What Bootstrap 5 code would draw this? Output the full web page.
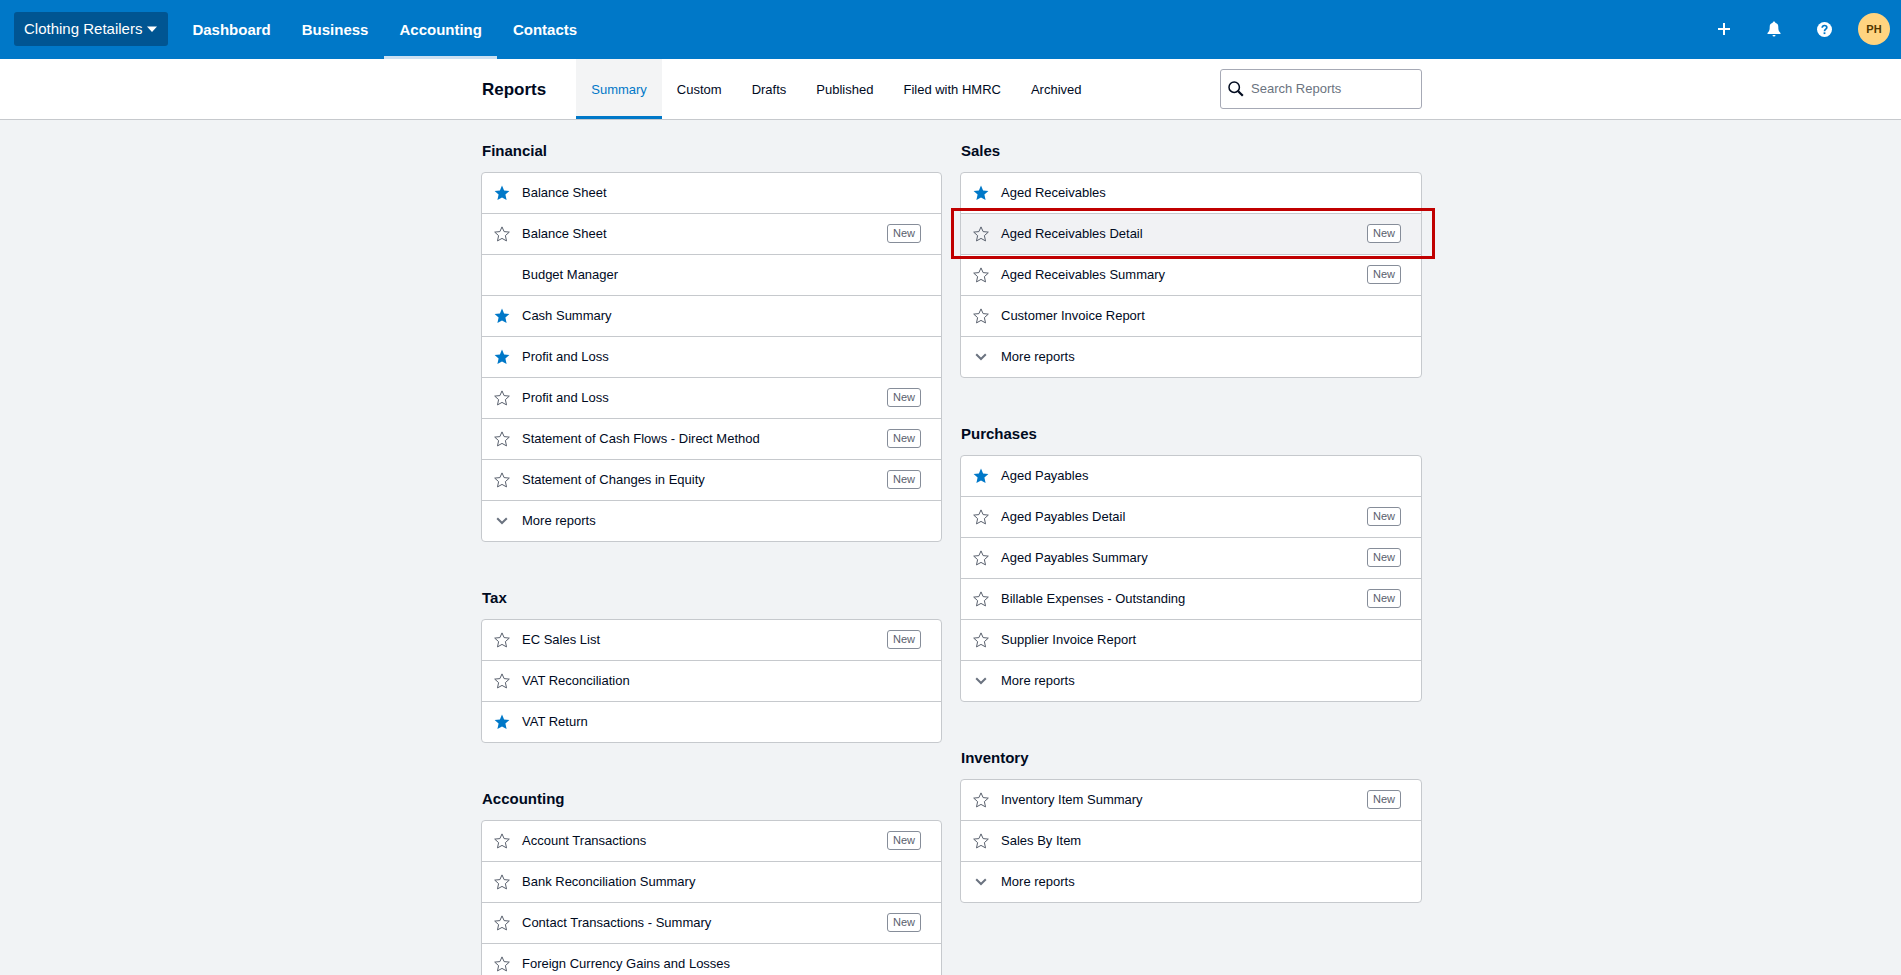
<!DOCTYPE html>
<html lang="en">
<head>
<meta charset="utf-8">
<meta name="viewport" content="width=device-width, initial-scale=1">
<title>Reports</title>
<link href="https://cdn.jsdelivr.net/npm/bootstrap@5.3.0/dist/css/bootstrap.min.css" rel="stylesheet">
<style>
  :root { --brand: #0078c8; --ink: #000a1e; --line: #c6c9cd; --muted: #59606d; }
  body { font-family: "Liberation Sans", Arial, sans-serif; font-size: 13px; line-height: 20px; color: var(--ink); background: #f1f3f5; }
  .topbar { background: var(--brand); height: 59px; padding: 0 2px 0 14px; }
  .org-btn { background: #005592; color: #fff; font-size: 15px; line-height: 20px; height: 34px; padding: 0 10px; border-radius: 3px; border: 0; margin: 0 9px 1px 0; }
  .main-nav { gap: 1px; }
  .main-link { color: #fff; font-size: 15px; font-weight: 700; padding: 0 15px; border-bottom: 3px solid transparent; border-top: 3px solid transparent; display: flex; align-items: center; text-decoration: none; }
  .main-link.active { border-bottom-color: #cbe0f2; }
  .icon-btn { width: 50px; height: 50px; margin-bottom: 1px; padding: 0; border: 0; background: none; color: #fff; display: flex; align-items: center; justify-content: center; }
  .avatar { width: 32px; height: 32px; border-radius: 50%; background: #ffd480; color: #503700; font-size: 11px; font-weight: 700; display: flex; align-items: center; justify-content: center; }
  .subbar { background: #fff; border-bottom: 1px solid var(--line); }
  .wrap { max-width: 943px; margin: 0 auto; padding-left: 2px; }
  .page-title { font-size: 17px; line-height: 20px; font-weight: 700; margin: 0 30px 0 1px; padding-top: 2px; }
  .tab-link { color: var(--ink); height: 60px; padding: 2px 15px 0; border-top: 3px solid transparent; border-bottom: 3px solid transparent; display: flex; align-items: center; text-decoration: none; }
  .tab-link.active { color: var(--brand); background: #f3f4f5; border-top-color: #f3f4f5; border-bottom-color: var(--brand); }
  .search-box { width: 202px; height: 40px; border: 1px solid #a6a9b5; border-radius: 3px; padding: 0 7px; gap: 7px; background: #fff; }
  .search-box input { border: 0; outline: 0; padding: 0; min-width: 0; width: 100%; color: var(--ink); }
  .search-box input::placeholder { color: #6b7380; opacity: 1; }
  .report-cols { display: grid; grid-template-columns: 461fr 462fr; column-gap: 18px; padding-top: 21px; }
  .report-col { min-width: 0; display: flex; flex-direction: column; gap: 46px; }
  .group-title { font-size: 15px; line-height: 20px; font-weight: 700; margin: 0 0 11px 1px; }
  .report-list { border: 1px solid var(--line); border-radius: 4px; background: #fff; margin: 0; padding: 0; list-style: none; }
  .report-row { height: 41px; border-bottom: 1px solid var(--line); display: flex; align-items: center; padding: 0 20px 0 10px; position: relative; }
  .report-row:last-child { border-bottom: 0; height: 40px; }
  .report-row a, .more-btn { color: var(--ink); text-decoration: none; }
  .star-btn { width: 20px; height: 20px; margin-right: 10px; padding: 0; border: 0; background: none; display: flex; align-items: center; justify-content: center; color: var(--muted); }
  .more-btn { border: 0; background: none; padding: 0; display: flex; align-items: center; }
  .more-btn svg { margin: 0 12px 0 2px; color: #6b7380; }
  .new-tag { margin: 0 0 1px auto; width: 34px; height: 19px; border: 1px solid #868d99; border-radius: 3px; background: #fff; color: var(--muted); font-size: 11px; line-height: 17px; text-align: center; }
  .hovered { background: #f1f2f4; }
  .callout-frame { position: absolute; top: -6px; bottom: -5px; left: -10px; right: -14px; border: 3px solid #c00000; pointer-events: none; z-index: 1; }
</style>
</head>
<body class="vh-100 overflow-hidden">
<svg class="d-none" aria-hidden="true">
  <symbol id="star-on" viewBox="0 0 16 16"><path fill="#0078c8" d="M8 .6l2.100 4.900 5.300.5-4 3.500 1.200 5.600L8 12.500l-4.600 2.600 1.200-5.600-4-3.500 5.300-.5z"/></symbol>
  <symbol id="star-off" viewBox="0 0 16 16"><path fill="none" stroke="currentColor" stroke-linejoin="round" d="M8 .9l2.100 4.700 5.200.5-3.900 3.500 1.100 5.300L8 12.400l-4.500 2.500 1.100-5.300L.7 6.100l5.200-.5z"/></symbol>
  <symbol id="chevron" viewBox="0 0 16 16"><path fill="none" stroke="currentColor" stroke-width="2" d="M3.200 5.200L8 10l4.800-4.800"/></symbol>
</svg>

<header class="topbar d-flex align-items-center">
  <button type="button" class="org-btn d-flex align-items-center">Clothing Retailers
    <svg class="ms-1" width="12" height="8" viewBox="0 0 12 8" aria-hidden="true"><path fill="#fff" d="M1 1.500h10L6 7z"/></svg>
  </button>
  <nav class="main-nav d-flex align-self-stretch" aria-label="Main">
    <a class="main-link" href="#">Dashboard</a>
    <a class="main-link" href="#">Business</a>
    <a class="main-link active" href="#" aria-current="page">Accounting</a>
    <a class="main-link" href="#">Contacts</a>
  </nav>
  <div class="d-flex align-items-center ms-auto">
    <button type="button" class="icon-btn" aria-label="Create new"><svg width="12" height="12" viewBox="0 0 12 12"><path fill="#fff" d="M5 0h2v5h5v2H7v5H5V7H0V5h5z"/></svg></button>
    <button type="button" class="icon-btn" aria-label="Notifications"><svg width="14" height="16" viewBox="0 0 14 16"><path fill="#fff" d="M7 .5c.8 0 1.300.6 1.300 1.300C10.600 2.400 11.300 4 11.300 6c0 3 .4 4.300 2.200 6v1H.5v-1C2.300 10.300 2.700 9 2.700 6c0-2 .7-3.600 3-4.200C5.700 1.100 6.200.5 7 .5zM5.500 14h3a1.500 1.500 0 0 1-3 0z"/></svg></button>
    <button type="button" class="icon-btn" aria-label="Help"><svg width="15" height="15" viewBox="0 0 15 15"><circle cx="7.500" cy="7.500" r="7.500" fill="#fff"/><path fill="none" stroke="#0078c8" stroke-width="1.700" d="M5.200 5.700c0-1.300 1-2.200 2.300-2.200s2.300.8 2.300 2c0 1.700-2.300 1.700-2.300 3.700"/><path fill="#0078c8" d="M6.600 10.300h1.800v1.800H6.600z"/></svg></button>
    <button type="button" class="icon-btn" aria-label="Account"><span class="avatar">PH</span></button>
  </div>
</header>

<div class="subbar">
  <div class="wrap d-flex align-items-center">
    <h1 class="page-title">Reports</h1>
    <nav class="d-flex" aria-label="Reports">
      <a class="tab-link active" href="#" aria-current="page">Summary</a>
      <a class="tab-link" href="#">Custom</a>
      <a class="tab-link" href="#">Drafts</a>
      <a class="tab-link" href="#">Published</a>
      <a class="tab-link" href="#">Filed with HMRC</a>
      <a class="tab-link" href="#">Archived</a>
    </nav>
    <label class="search-box d-flex align-items-center ms-auto">
      <svg class="flex-shrink-0" width="16" height="16" viewBox="0 0 16 16" aria-hidden="true"><g fill="none" stroke="#000a1e"><circle cx="6.200" cy="6.200" r="5.200" stroke-width="1.500"/><path stroke-width="2.200" d="M10.200 10.200l4.600 4.600"/></g></svg>
      <input type="search" placeholder="Search Reports" aria-label="Search Reports">
    </label>
  </div>
</div>

<main class="wrap report-cols">
  <div class="report-col" id="col-left"></div>
  <div class="report-col" id="col-right"></div>
</main>

<script src="https://cdn.jsdelivr.net/npm/bootstrap@5.3.0/dist/js/bootstrap.bundle.min.js"></script>
<script>
  // Row format: "name|flags": f = favourite, n = new, x = cannot be starred, h = highlighted
  const left = [
    ['Financial', true, ['Balance Sheet|f', 'Balance Sheet|n', 'Budget Manager|x', 'Cash Summary|f', 'Profit and Loss|f', 'Profit and Loss|n', 'Statement of Cash Flows - Direct Method|n', 'Statement of Changes in Equity|n']],
    ['Tax', false, ['EC Sales List|n', 'VAT Reconciliation|', 'VAT Return|f']],
    ['Accounting', false, ['Account Transactions|n', 'Bank Reconciliation Summary|', 'Contact Transactions - Summary|n', 'Foreign Currency Gains and Losses|']]
  ];
  const right = [
    ['Sales', true, ['Aged Receivables|f', 'Aged Receivables Detail|nh', 'Aged Receivables Summary|n', 'Customer Invoice Report|']],
    ['Purchases', true, ['Aged Payables|f', 'Aged Payables Detail|n', 'Aged Payables Summary|n', 'Billable Expenses - Outstanding|n', 'Supplier Invoice Report|']],
    ['Inventory', true, ['Inventory Item Summary|n', 'Sales By Item|']]
  ];
  const icon = (id) => `<svg width="16" height="16" aria-hidden="true"><use href="#${id}"/></svg>`;
  const row = (text) => {
    const [name, flags] = text.split('|');
    const has = (f) => flags.includes(f);
    const star = has('x') ? '<span class="star-btn"></span>'
      : `<button type="button" class="star-btn" aria-label="Favourite ${name}">${icon(has('f') ? 'star-on' : 'star-off')}</button>`;
    return `<li class="report-row${has('h') ? ' hovered' : ''}">${star}<a href="#">${name}</a>${has('n') ? '<span class="new-tag">New</span>' : ''}${has('h') ? '<span class="callout-frame"></span>' : ''}</li>`;
  };
  const group = ([title, more, rows]) => `<section><h2 class="group-title">${title}</h2><ul class="report-list">${rows.map(row).join('')}${more ? `<li class="report-row"><button type="button" class="more-btn">${icon('chevron')}More reports</button></li>` : ''}</ul></section>`;
  document.getElementById('col-left').innerHTML = left.map(group).join('');
  document.getElementById('col-right').innerHTML = right.map(group).join('');
</script>
</body>
</html>
